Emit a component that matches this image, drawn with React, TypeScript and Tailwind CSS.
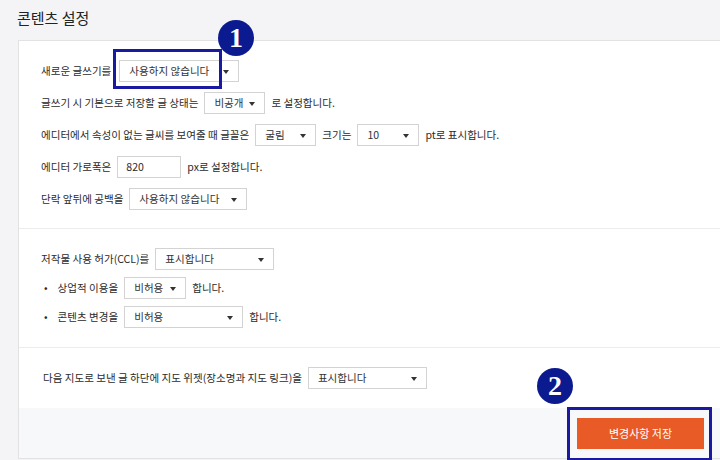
import React from "react";

const font = { fontFamily: '"Noto Sans CJK KR", "Noto Sans", sans-serif' };

const Select = ({ value, w }: { value: string; w: string }) => (
  <div
    className={`relative flex h-[22px] items-center border border-[#d3d3d3] bg-white pl-[9px] text-[#333] ${w}`}
  >
    <span>{value}</span>
    <span className="absolute right-[9px] top-[9px] h-0 w-0 border-x-[3px] border-t-[4px] border-x-transparent border-t-[#333]" />
  </div>
);

const Badge = ({ n, className }: { n: string; className: string }) => (
  <div
    className={`absolute flex h-[36px] w-[36px] items-center justify-center rounded-full bg-[#0b1a8e] text-[28px] font-bold leading-none text-white ${className}`}
    style={{ fontFamily: '"Liberation Serif", serif' }}
  >
    {n}
  </div>
);

export default function App() {
  return (
    <div
      className="relative h-[460px] w-[720px] overflow-hidden bg-[#f4f4f6] text-[10.55px] text-[#2b2b2b]"
      style={font}
    >
      <h1 className="ml-[17px] pt-[8px] text-[15px] leading-[20px] text-[#222]">
        콘텐츠 설정
      </h1>

      <div className="ml-[18px] mt-[12px] border-y border-l border-[#e2e2e2] bg-white">
        {/* section 1 */}
        <div className="flex flex-col gap-[10px] pb-[18px] pl-[22px] pt-[19px]">
          <div className="flex items-center gap-[8px]">
            <span>새로운 글쓰기를</span>
            <Select value="사용하지 않습니다" w="w-[120px]" />
          </div>
          <div className="flex items-center gap-[6px]">
            <span>글쓰기 시 기본으로 저장할 글 상태는</span>
            <Select value="비공개" w="w-[61px]" />
            <span>로 설정합니다.</span>
          </div>
          <div className="flex items-center gap-[6px]">
            <span>에디터에서 속성이 없는 글씨를 보여줄 때 글꼴은</span>
            <Select value="굴림" w="w-[61px]" />
            <span>크기는</span>
            <Select value="10" w="w-[62px]" />
            <span>pt로 표시합니다.</span>
          </div>
          <div className="flex items-center gap-[6px]">
            <span>에디터 가로폭은</span>
            <div className="flex h-[22px] w-[64px] items-center border border-[#d3d3d3] pl-[8px]">
              820
            </div>
            <span>px로 설정합니다.</span>
          </div>
          <div className="flex items-center gap-[6px]">
            <span>단락 앞뒤에 공백을</span>
            <Select value="사용하지 않습니다" w="w-[118px]" />
          </div>
        </div>

        {/* section 2 */}
        <div className="flex flex-col gap-[7px] border-t border-[#ececec] pb-[19px] pl-[22px] pt-[19px]">
          <div className="flex items-center gap-[6px]">
            <span>저작물 사용 허가(CCL)를</span>
            <Select value="표시합니다" w="w-[119px]" />
          </div>
          <div className="flex items-center gap-[6px]">
            <span className="ml-[3px] mr-[4px]">•</span>
            <span>상업적 이용을</span>
            <Select value="비허용" w="w-[62px]" />
            <span>합니다.</span>
          </div>
          <div className="flex items-center gap-[6px]">
            <span className="ml-[3px] mr-[4px]">•</span>
            <span>콘텐츠 변경을</span>
            <Select value="비허용" w="w-[119px]" />
            <span>합니다.</span>
          </div>
        </div>

        {/* section 3 */}
        <div className="flex items-center gap-[6px] border-t border-[#ececec] py-[19px] pl-[24px]">
          <span>다음 지도로 보낸 글 하단에 지도 위젯(장소명과 지도 링크)을</span>
          <Select value="표시합니다" w="w-[119px]" />
        </div>

        {/* footer */}
        <div className="flex justify-end bg-[#f7f8fa] pb-[9px] pr-[16px] pt-[10px]">
          <button className="h-[31px] w-[127px] bg-[#e85a26] text-[11px] text-white">
            변경사항 저장
          </button>
        </div>
      </div>

      {/* annotation overlays */}
      <div className="absolute left-[113px] top-[49px] h-[40px] w-[109px] border-[3px] border-[#1a1aa0]" />
      <Badge n="1" className="left-[218px] top-[20px]" />
      <div className="absolute left-[567px] top-[407px] h-[54px] w-[145px] border-[3px] border-[#1a1aa0]" />
      <Badge n="2" className="left-[537px] top-[368px]" />
    </div>
  );
}
